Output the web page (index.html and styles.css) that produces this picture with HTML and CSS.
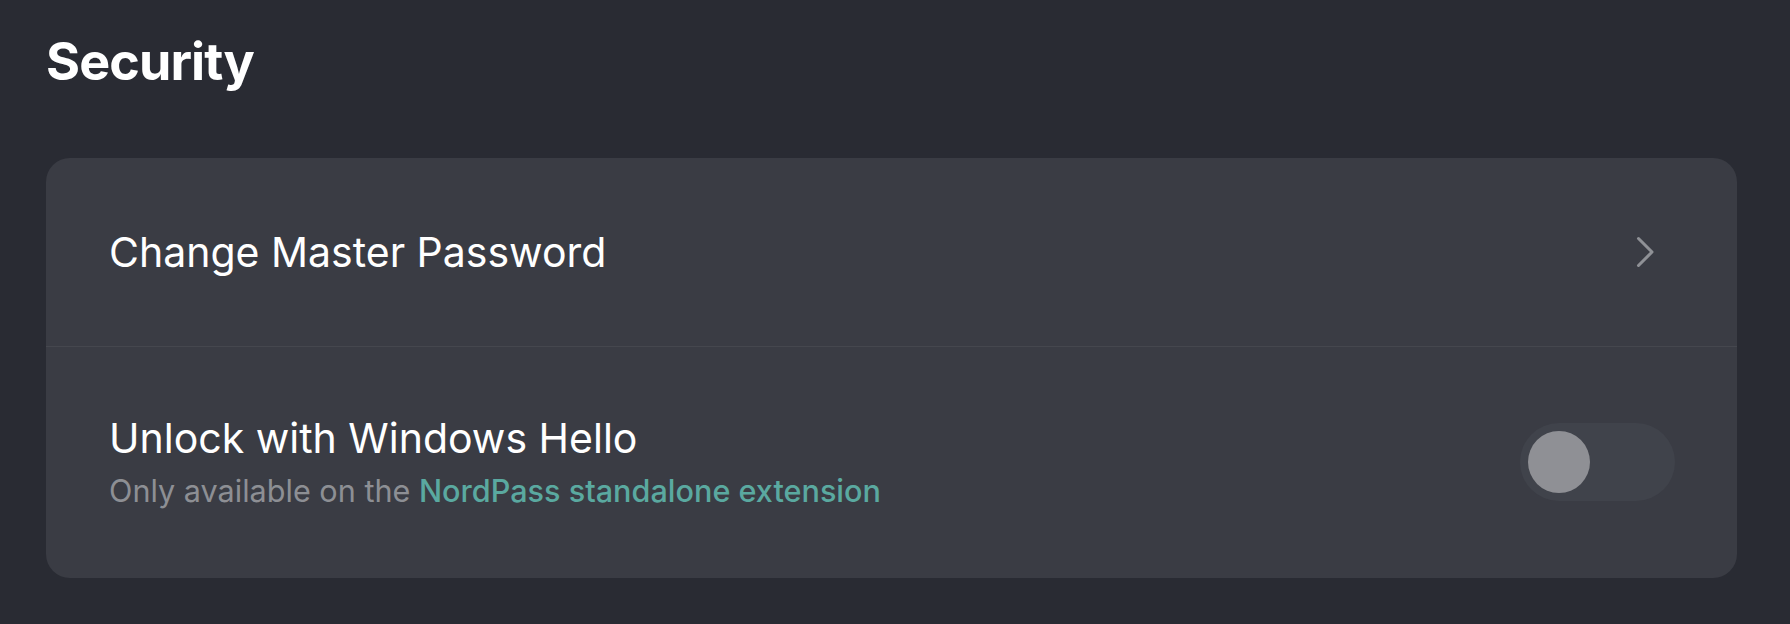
FILE: index.html
```html
<!DOCTYPE html>
<html lang="en">
<head>
  <meta charset="UTF-8">
  <meta name="viewport" content="width=device-width, initial-scale=1.0">
  <title>Security</title>
  <link rel="stylesheet" href="styles.css">
</head>
<body>
  <div class="page">
    <h1>Security</h1>
    <div class="card">
      <div class="row row-link">
        <span class="row-title">Change Master Password</span>
        <svg class="chevron" width="20" height="34" viewBox="0 0 20 34">
          <path d="M3.5 3.5 L17 17 L3.5 30.5" fill="none" stroke="#8f9196" stroke-width="3" stroke-linecap="round" stroke-linejoin="round"/>
        </svg>
      </div>
      <div class="row row-toggle">
        <div class="row-text">
          <p class="row-title">Unlock with Windows Hello</p>
          <p class="row-sub">Only available on the <a href="#">NordPass standalone extension</a></p>
        </div>
        <button class="toggle" aria-label="Unlock with Windows Hello"><span class="knob"></span></button>
      </div>
    </div>
  </div>
</body>
</html>
```

FILE: styles.css
```css
body {
  margin: 0;
  background-color: #292b33;
  font-family: Inter, "Noto Sans", sans-serif;
  color: #fff;
}
.page {
  padding: 30px 53px 0 46px;
}
h1 {
  margin: 0;
  font-size: 52px;
  font-weight: 700;
  letter-spacing: -0.9px;
  line-height: 63px;
  height: 128px;
}
.card {
  background-color: #3a3c44;
  border-radius: 24px;
}
.row {
  display: flex;
  align-items: center;
  justify-content: space-between;
  min-height: 188px;
  padding: 0 62px 0 63px;
  box-sizing: border-box;
}
.row-toggle {
  border-top: 1px solid #45474e;
  padding-top: 67px;
  padding-bottom: 69px;
}
.row-title {
  margin: 0;
  font-size: 41px;
  line-height: 48px;
  font-weight: 400;
}
.chevron {
  display: block;
  margin-right: 20px;
}
.row-sub {
  margin: 11px 0 0;
  font-size: 30.6px;
  line-height: 36px;
  color: #8d8f94;
}
.row-sub a {
  color: #5aa9a0;
  font-weight: 500;
  text-decoration: none;
}
.toggle {
  width: 155px;
  height: 78px;
  padding: 8px;
  border: none;
  border-radius: 39px;
  background-color: #40434b;
  cursor: pointer;
  display: flex;
  align-items: center;
}
.knob {
  width: 62px;
  height: 62px;
  border-radius: 50%;
  background-color: #8f9095;
}
```
